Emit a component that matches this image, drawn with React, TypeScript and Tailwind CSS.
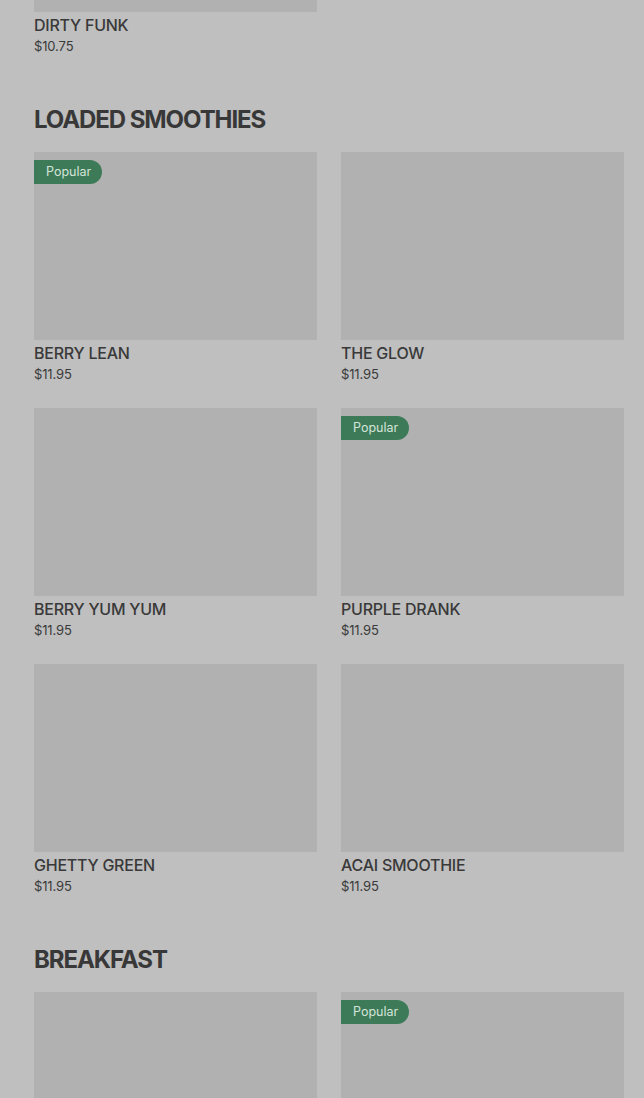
type Item = {
  name: string;
  price: string;
  popular?: boolean;
};

type Section = {
  title?: string;
  items: Item[];
};

const sections: Section[] = [
  { items: [{ name: "DIRTY FUNK", price: "$10.75" }] },
  {
    title: "LOADED SMOOTHIES",
    items: [
      { name: "BERRY LEAN", price: "$11.95", popular: true },
      { name: "THE GLOW", price: "$11.95" },
      { name: "BERRY YUM YUM", price: "$11.95" },
      { name: "PURPLE DRANK", price: "$11.95", popular: true },
      { name: "GHETTY GREEN", price: "$11.95" },
      { name: "ACAI SMOOTHIE", price: "$11.95" },
    ],
  },
  {
    title: "BREAKFAST",
    items: [
      { name: "", price: "" },
      { name: "", price: "", popular: true },
    ],
  },
];

const MenuCard = ({ item }: { item: Item }) => {
  return (
    <div className="flex flex-col">
      <div className="relative h-[188px] w-full bg-[#b1b1b1]">
        {item.popular ? (
          <span className="absolute left-0 top-2 flex h-6 items-center rounded-r-full bg-[#3d7b58] pl-3 pr-[11px] text-[12.5px] text-[#d5e4da]">
            Popular
          </span>
        ) : null}
      </div>
      {item.name ? (
        <p className="mt-[2px] text-[16px] font-medium leading-[22px] tracking-[-0.015em] text-[#393939]">
          {item.name}
        </p>
      ) : null}
      {item.price ? (
        <p className="text-[13px] leading-[20px] tracking-[-0.01em] text-[#3a3a3a]">
          {item.price}
        </p>
      ) : null}
    </div>
  );
};

export default function App() {
  return (
    <div
      className="h-screen overflow-hidden bg-[#bfbfbf]"
      style={{ fontFamily: "Inter, 'Noto Sans', sans-serif" }}
    >
      <div className="-mt-[176px] pl-[34px] pr-5">
        {sections.map((section, i) => (
          <section key={i} className={i > 0 ? "mt-[48px]" : ""}>
            {section.title ? (
              <h2 className="mb-4 text-[24px] font-bold leading-8 tracking-[-0.045em] text-[#383838]">
                {section.title}
              </h2>
            ) : null}
            <div className="grid grid-cols-2 gap-x-6 gap-y-6">
              {section.items.map((item, j) => (
                <MenuCard key={j} item={item} />
              ))}
            </div>
          </section>
        ))}
      </div>
    </div>
  );
}
